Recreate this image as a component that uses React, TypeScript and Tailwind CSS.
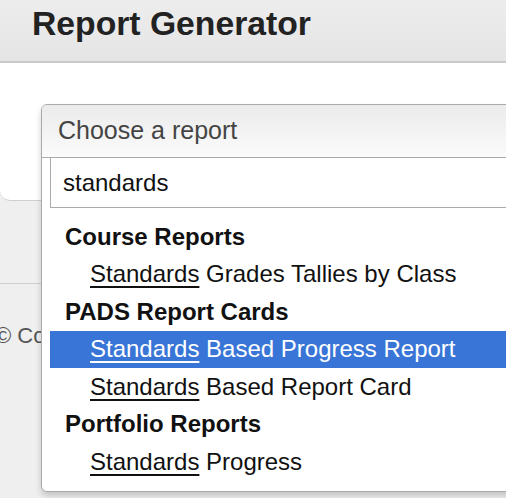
import React from 'react'

type Row = { kind: 'group'; label: string } | { kind: 'item'; rest: string; active?: boolean }

const ROWS: Row[] = [
  { kind: 'group', label: 'Course Reports' },
  { kind: 'item', rest: ' Grades Tallies by Class' },
  { kind: 'group', label: 'PADS Report Cards' },
  { kind: 'item', rest: ' Based Progress Report', active: true },
  { kind: 'item', rest: ' Based Report Card' },
  { kind: 'group', label: 'Portfolio Reports' },
  { kind: 'item', rest: ' Progress' },
]

function ReportDropdown() {
  return (
    <div className="absolute left-[41px] top-[104px] w-[540px] rounded-[6px] border-[1.5px] border-[#aaa] bg-white shadow-[0_4px_6px_rgba(0,0,0,0.18)]">
      {/* selected value */}
      <div className="flex h-[53px] items-center rounded-t-[5px] border-b-[1.5px] border-[#aaa] bg-gradient-to-b from-[#ebebeb] to-[#fbfbfb] pl-[16px] text-[25px] text-[#444]">
        Choose a report
      </div>
      {/* search */}
      <div className="ml-[8px] flex h-[50px] items-center border-[1.5px] border-t-0 border-[#aaa] pl-[12px] text-[24px] text-[#111]">
        standards
      </div>
      <ul className="ml-[8px] pb-[10px] pt-[10px]">
        {ROWS.map((r, i) =>
          r.kind === 'group' ? (
            <li key={i} className="flex h-[37.5px] items-center pl-[15px] text-[24px] font-bold text-[#111]">
              {r.label}
            </li>
          ) : (
            <li
              key={i}
              className={
                r.active
                  ? 'flex h-[37.5px] items-center bg-[#3875d7] pl-[40px] text-[24px] text-white'
                  : 'flex h-[37.5px] items-center pl-[40px] text-[24px] text-[#111]'
              }
            >
              <span className="whitespace-pre">
                <span className="underline decoration-[1.5px] underline-offset-[4px]">Standards</span>
                {r.rest}
              </span>
            </li>
          )
        )}
      </ul>
    </div>
  )
}

export default function App() {
  return (
    <div className="relative h-[498px] w-[506px] overflow-hidden bg-[#efefef] font-['Liberation_Sans',Arial,sans-serif]">
      <div className="h-[63px] border-b-2 border-[#c9c9c9] bg-gradient-to-b from-[#ededed] to-[#e5e5e5] pl-[32px] pt-[3px]">
        <h1 className="text-[33.7px] font-bold leading-[40px] text-[#222]">Report Generator</h1>
      </div>
      <div className="h-[138px] rounded-bl-[10px] border-b-[1.5px] border-[#cfcfcf] bg-white" />
      <div className="mt-[82px] border-t-[1.5px] border-[#cfcfcf] pt-[38px]">
        <p className="-ml-[5px] text-[22px] leading-[28px] text-[#555]">© Copyright</p>
      </div>
      <ReportDropdown />
    </div>
  )
}
